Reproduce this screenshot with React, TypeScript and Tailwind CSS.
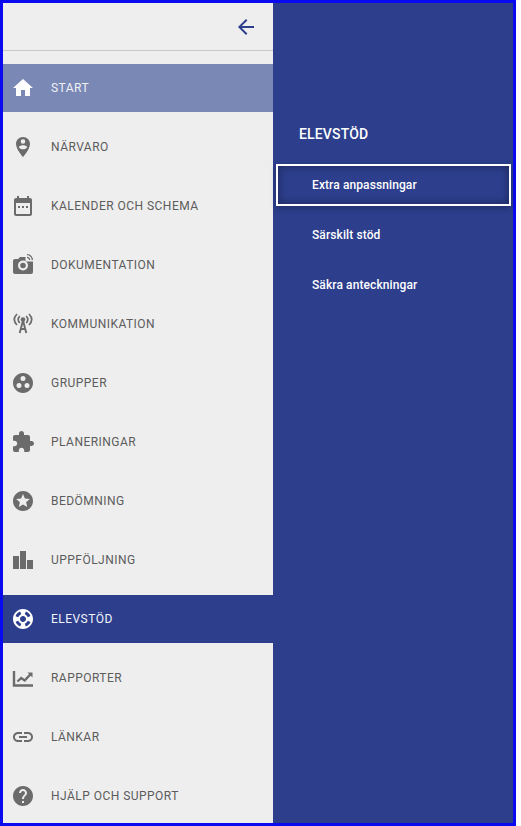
import React from "react";

const P = ({ d, cls = "" }: { d: string; cls?: string }) => (
  <svg viewBox="0 0 24 24" className={`w-6 h-6 fill-current ${cls}`}>
    <path d={d} fillRule="evenodd" />
  </svg>
);

const icons: Record<string, string> = {
  home: "M10 20v-6h4v6h5v-8h3L12 3 2 12h3v8z",
  pin: "M12 2C8.100 2 5 5.100 5 9c0 5.200 7 13 7 13s7-7.800 7-13c0-3.900-3.100-7-7-7zm0 2.200a2.300 2.300 0 1 1 0 4.600 2.300 2.300 0 0 1 0-4.600zM12 14.200c-1.800 0-3.400-.9-4.300-2.300C8.400 10.800 10.600 10.200 12 10.200s3.600.6 4.300 1.700c-.9 1.400-2.500 2.300-4.300 2.300z",
  cal: "M19 4h-1V2h-2v2H8V2H6v2H5c-1.100 0-2 .9-2 2v14c0 1.100.9 2 2 2h14c1.100 0 2-.9 2-2V6c0-1.100-.9-2-2-2zm0 16H5V9h14v11zM7 12h2v2H7zm4 0h2v2h-2zm4 0h2v2h-2z",
  cam: "M16 1v1.300c2.600 0 4.700 2.100 4.700 4.700H22c0-3.300-2.700-6-6-6zm0 2.700V5c1.100 0 2 .9 2 2h1.300c0-1.800-1.500-3.300-3.300-3.300zM14.500 7V4H9L7.200 6H4c-1.100 0-2 .9-2 2v11c0 1.100.9 2 2 2h16c1.100 0 2-.9 2-2V8.500h-6.500c-.6 0-1-.5-1-1.500zM12 17.500a5 5 0 1 1 0-10 5 5 0 0 1 0 10zm0-2.200a2.800 2.800 0 1 0 0-5.600 2.800 2.800 0 0 0 0 5.600z",
  link: "M3.900 12c0-1.710 1.390-3.100 3.100-3.100h4V7H7c-2.760 0-5 2.240-5 5s2.240 5 5 5h4v-1.900H7c-1.710 0-3.100-1.390-3.100-3.100zM8 13h8v-2H8v2zm9-6h-4v1.900h4c1.710 0 3.100 1.390 3.100 3.100s-1.390 3.100-3.100 3.100h-4V17h4c2.760 0 5-2.240 5-5s-2.240-5-5-5z",
  groups: "M12 2C6.480 2 2 6.480 2 12s4.480 10 10 10 10-4.480 10-10S17.520 2 12 2zM8 17a2.500 2.500 0 1 1 0-5 2.500 2.500 0 0 1 0 5zm4-7a2.500 2.500 0 1 1 0-5 2.500 2.500 0 0 1 0 5zm4 7a2.500 2.500 0 1 1 0-5 2.500 2.500 0 0 1 0 5z",
  puzzle: "M20.500 11H19V7c0-1.100-.9-2-2-2h-4V3.500C13 2.120 11.880 1 10.500 1S8 2.120 8 3.500V5H4c-1.100 0-1.990.9-1.990 2v3.800H3.500c1.490 0 2.700 1.210 2.700 2.700s-1.210 2.700-2.700 2.700H2V20c0 1.100.9 2 2 2h3.800v-1.500c0-1.490 1.210-2.700 2.700-2.700 1.490 0 2.700 1.210 2.700 2.700V22H17c1.100 0 2-.9 2-2v-4h1.500c1.380 0 2.500-1.120 2.500-2.500S21.880 11 20.500 11z",
  star: "M11.990 2C6.470 2 2 6.480 2 12s4.470 10 9.990 10C17.520 22 22 17.520 22 12S17.520 2 11.990 2zm4.240 16L12 15.450 7.770 18l1.120-4.810-3.730-3.230 4.920-.42L12 5l1.920 4.530 4.920.42-3.730 3.230L16.230 18z",
  bars: "M2 8h6v13H2zM9 3h6v18H9zM16 12h6v9h-6z",
  buoy: "M12 2C6.480 2 2 6.480 2 12s4.480 10 10 10 10-4.480 10-10S17.520 2 12 2zm7.460 7.120l-2.780 1.150c-.51-1.360-1.580-2.440-2.950-2.940l1.150-2.780c2.100.8 3.770 2.470 4.580 4.570zM12 15c-1.660 0-3-1.340-3-3s1.340-3 3-3 3 1.340 3 3-1.340 3-3 3zM9.130 4.540l1.170 2.780c-1.380.5-2.470 1.590-2.980 2.970L4.540 9.130c.81-2.110 2.480-3.780 4.590-4.590zM4.540 14.870l2.780-1.150c.51 1.380 1.590 2.460 2.970 2.960l-1.170 2.780c-2.100-.81-3.770-2.480-4.580-4.590zm10.340 4.590l-1.150-2.780c1.370-.51 2.450-1.590 2.950-2.970l2.780 1.170c-.81 2.100-2.480 3.770-4.580 4.580z",
  help: "M12 2C6.480 2 2 6.480 2 12s4.480 10 10 10 10-4.480 10-10S17.520 2 12 2zm1 17h-2v-2h2v2zm2.070-7.750l-.9.920C13.450 12.900 13 13.500 13 15h-2v-.5c0-1.100.45-2.100 1.170-2.830l1.240-1.260c.37-.36.590-.86.590-1.410 0-1.100-.9-2-2-2s-2 .9-2 2H8c0-2.210 1.790-4 4-4s4 1.790 4 4c0 .88-.36 1.680-.93 2.250z",
};

const Antenna = () => (
  <svg viewBox="0 0 24 24" className="w-6 h-6 fill-none stroke-current">
    <circle cx="12" cy="7.500" r="2.300" fill="currentColor" stroke="none" />
    <path d="M12 8.500 8.700 21M12 8.500 15.300 21M9.800 17h4.400" strokeWidth="1.900" />
    <path d="M8.800 4Q5.600 7.500 8.800 11M15.200 4Q18.400 7.500 15.200 11M6 2Q.6 7.500 6 13M18 2Q23.400 7.500 18 13" strokeWidth="1.700" />
  </svg>
);

const Chart = () => (
  <svg viewBox="0 0 24 24" className="w-6 h-6 fill-none stroke-current">
    <path d="M3 5v14.500h19" strokeWidth="2.400" />
    <path d="M6.500 15.500l3.700-3.500 3.500 2.500 6-6.500" strokeWidth="2.400" />
    <path d="M16.500 6.500H21.500V11.500z" fill="currentColor" stroke="none" />
  </svg>
);

const items: { label: string; icon: string; state?: "light" | "active" }[] = [
  { label: "START", icon: "home", state: "light" },
  { label: "NÄRVARO", icon: "pin" },
  { label: "KALENDER OCH SCHEMA", icon: "cal" },
  { label: "DOKUMENTATION", icon: "cam" },
  { label: "KOMMUNIKATION", icon: "antenna" },
  { label: "GRUPPER", icon: "groups" },
  { label: "PLANERINGAR", icon: "puzzle" },
  { label: "BEDÖMNING", icon: "star" },
  { label: "UPPFÖLJNING", icon: "bars" },
  { label: "ELEVSTÖD", icon: "buoy", state: "active" },
  { label: "RAPPORTER", icon: "chart" },
  { label: "LÄNKAR", icon: "link" },
  { label: "HJÄLP OCH SUPPORT", icon: "help" },
];

export default function App() {
  return (
    <div className="w-[516px] h-[826px] border-[3px] border-[#0a0af0] flex font-['Roboto',sans-serif] bg-white box-border">
      <nav className="w-[270px] bg-[#eeeeee] flex flex-col shrink-0">
        <div className="h-[48px] flex items-center justify-end border-b border-[#c8c8c8] pr-[15px] text-[#2c3e8c] shrink-0">
          <P d="M20 11H7.800l5.600-5.600L12 4l-8 8 8 8 1.400-1.400L7.800 13H20z" />
        </div>
        <ul className="flex flex-col gap-[11px] mt-[13px]">
          {items.map((it) => {
            const row =
              it.state === "light"
                ? "bg-[#7a88b5] text-[#eef0f6]"
                : it.state === "active"
                ? "bg-[#2c3e8c] text-[#f2f3f8]"
                : "text-[#5c5c5c]";
            const ic =
              it.state === "light" || it.state === "active" ? "text-white" : "text-[#6b6b6b]";
            return (
              <li key={it.label} className={`h-[48px] flex items-center pl-[8px] ${row}`}>
                <span className={`w-[24px] h-[24px] ${ic}`}>
                  {it.icon === "antenna" ? <Antenna /> : it.icon === "chart" ? <Chart /> : <P d={icons[it.icon]} />}
                </span>
                <span className="ml-[16px] text-[12px] font-normal tracking-[0.47px]">{it.label}</span>
              </li>
            );
          })}
        </ul>
      </nav>
      <aside className="flex-1 bg-[#2c3e8c] text-white flex flex-col">
        <h2 className="mt-[121px] ml-[26px] text-[14px] font-medium leading-[20px] tracking-[0.15px] h-[20px]">ELEVSTÖD</h2>
        <ul className="mt-[20px] flex flex-col text-[12px] font-medium tracking-[0.1px] ml-[3px] mr-[2px]">
          <li className="h-[42px] flex items-center pl-[34px] border-2 border-white shadow-[inset_0_0_8px_rgba(0,0,0,0.4),0_2px_6px_rgba(0,0,0,0.25)]">Extra anpassningar</li>
          <li className="h-[42px] mt-[8px] flex items-center pl-[36px]">Särskilt stöd</li>
          <li className="h-[42px] mt-[8px] flex items-center pl-[36px]">Säkra anteckningar</li>
        </ul>
      </aside>
    </div>
  );
}
